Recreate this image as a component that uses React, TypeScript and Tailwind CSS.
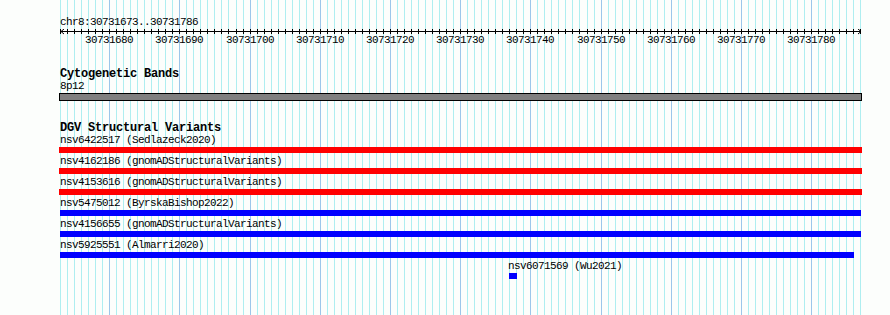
import React from 'react';

const START = 30731673;
const END = 30731786;
const PX = 7.02;
const X0 = 60;
const LEFT = 59;

const gx = (i: number) => Math.round(X0 + i * PX);

interface Feature {
    label: string;
    color: string;
    x1: number;
    x2: number;
    labelX: number;
}

const features: Feature[] = [
    { label: 'nsv6422517 (Sedlazeck2020)', color: '#ff0000', x1: 59, x2: 862, labelX: 60 },
    { label: 'nsv4162186 (gnomADStructuralVariants)', color: '#ff0000', x1: 59, x2: 862, labelX: 60 },
    { label: 'nsv4153616 (gnomADStructuralVariants)', color: '#ff0000', x1: 59, x2: 862, labelX: 60 },
    { label: 'nsv5475012 (ByrskaBishop2022)', color: '#0000ff', x1: 60, x2: 861, labelX: 60 },
    { label: 'nsv4156655 (gnomADStructuralVariants)', color: '#0000ff', x1: 60, x2: 861, labelX: 60 },
    { label: 'nsv5925551 (Almarri2020)', color: '#0000ff', x1: 60, x2: 854, labelX: 60 },
    { label: 'nsv6071569 (Wu2021)', color: '#0000ff', x1: 509, x2: 517, labelX: 508 },
];

const bases = Array.from({ length: END - START + 2 }, (_, i) => i);

const Grid: React.FC = () => (
    <svg className="absolute inset-0" width={890} height={315}>
        {bases.map((i) => {
            const major = (START + i) % 10 === 0;
            return (
                <line
                    key={i}
                    x1={gx(i) + 0.5}
                    x2={gx(i) + 0.5}
                    y1={0}
                    y2={315}
                    stroke={major ? '#9cc6ea' : '#aeeef0'}
                    strokeWidth={1}
                />
            );
        })}
    </svg>
);

const Ruler: React.FC = () => {
    const right = gx(END - START + 1) - LEFT;
    return (
        <div className="relative h-[40px] w-[803px]">
            <svg className="absolute top-0 left-0" width={803} height={10}>
                <line x1={2} x2={right + 1} y1={2.5} y2={2.5} stroke="#000" />
                {bases.map((i) => (
                    <line
                        key={i}
                        x1={gx(i) - LEFT + 0.5}
                        x2={gx(i) - LEFT + 0.5}
                        y1={0}
                        y2={5}
                        stroke="#000"
                    />
                ))}
                <polyline points={`5,0 2,2.5 5,5`} fill="none" stroke="#000" />
                <polyline points={`${right - 2},0 ${right + 1},2.5 ${right - 2},5`} fill="none" stroke="#000" />
            </svg>
            {bases
                .filter((i) => (START + i) % 10 === 0)
                .map((i) => (
                    <div
                        key={i}
                        className="absolute top-[5px] h-[13px] leading-[13px] -translate-x-1/2"
                        style={{ left: gx(i) - LEFT }}
                    >
                        {START + i}
                    </div>
                ))}
        </div>
    );
};

const App: React.FC = () => {
    return (
        <div className="relative w-[890px] h-[315px] bg-[#fcfefc] overflow-hidden font-['Liberation_Mono',monospace] text-[11px] tracking-[-0.6px] text-black">
            <Grid />
            <div className="relative pl-[59px] pt-[16px]">
                <div className="h-[13px] leading-[13px] pl-px">chr8:30731673..30731786</div>
                <Ruler />

                <div className="h-[11px] leading-[11px] text-[12px] font-bold tracking-[-0.2px] pl-px">Cytogenetic Bands</div>
                <div className="h-[13px] leading-[13px] pl-px">8p12</div>
                <div className="h-[8px] w-[803px] bg-[#808080] border border-black" />

                <div className="mt-[22px] h-[11px] leading-[11px] text-[12px] font-bold tracking-[-0.2px] pl-px">DGV Structural Variants</div>
                {features.map((f) => (
                    <div key={f.label} className="h-[21px]">
                        <div className="h-[13px] leading-[13px] whitespace-pre" style={{ marginLeft: f.labelX - LEFT }}>
                            {f.label}
                        </div>
                        <div className="h-[6px]" style={{ marginLeft: f.x1 - LEFT, width: f.x2 - f.x1, background: f.color }} />
                    </div>
                ))}
            </div>
        </div>
    );
};

export default App;
